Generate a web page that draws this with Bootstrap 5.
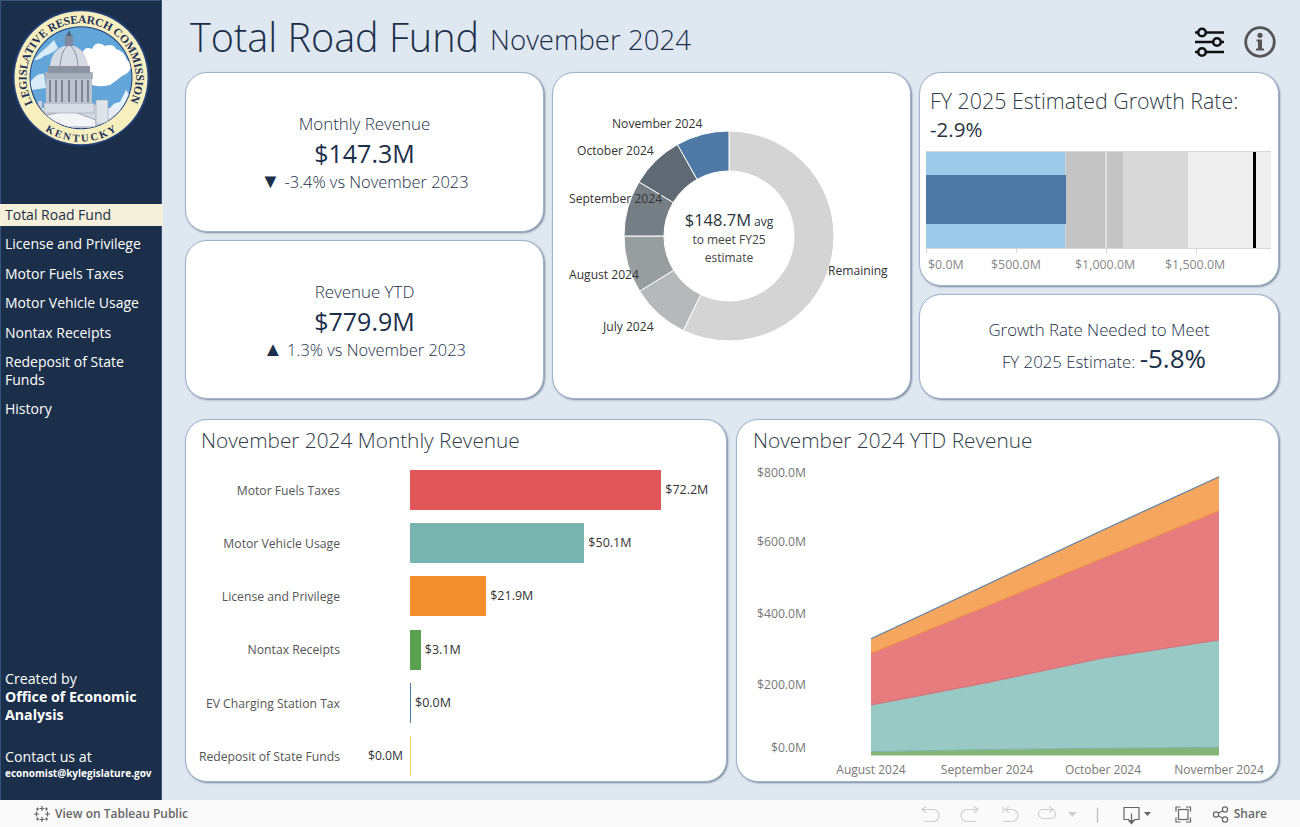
<!DOCTYPE html>
<html>
<head>
    <title>Total Road Fund</title>
    <link href="https://cdn.jsdelivr.net/npm/bootstrap@5.3.0/dist/css/bootstrap.min.css" rel="stylesheet">
    <style>
        body { height: 827px; overflow: hidden; background: #dfe7f1; font-family: "Open Sans", sans-serif; color: #1b2f4a; }
        .app-wrap { height: 800px; }
        .side-bar { width: 162px; background: #1b2f4a; border: 1px solid #35557f; border-bottom: 0; color: #fff; }
        .logo-box { height: 203px; }
        .side-link { color: #fff; font-size: 14px; line-height: 18px; padding: 2px 4px 2px 5px; margin-bottom: 7.4px; margin-left: -1px; }
        .side-link:hover { color: #fff; }
        .side-link.current { background: #f5f0d9; color: #1b2f4a; width: 163px; }
        .side-foot { font-size: 14.2px; line-height: 18px; padding-left: 4px; padding-bottom: 20px; }
        .side-foot b { font-weight: 700; }
        .side-mail { font-size: 10px; font-weight: 700; line-height: 14px; }
        .main-area { padding: 0 21px 0 23px; }
        .head-row { height: 72px; padding-left: 5px; padding-top: 4px; }
        .page-title { font-size: 39.6px; font-weight: 300; line-height: 1; margin: 0 11px 0 0; }
        .page-sub { font-size: 27.6px; font-weight: 300; line-height: 1; }
        .head-icons { gap: 18px; margin-right: 3px; margin-top: 7px; }
        .top-row { height: 327px; margin-bottom: 20px; }
        .low-row { height: 363px; }
        .col-kpi { width: 359px; }
        .col-side { width: 360px; }
        .tile { border: 1px solid #9db3cc; border-radius: 22px; box-shadow: 1px 1px 2px rgba(40,60,90,.55); background: #fff; overflow: hidden; color: #1b2f4a; }
        .kpi-box { padding-top: 3px; }
        .kpi-name { font-size: 16.9px; font-weight: 300; line-height: 22px; }
        .kpi-val { font-size: 25px; font-weight: 500; line-height: 36px; }
        .kpi-note { font-size: 16.4px; font-weight: 300; line-height: 22px; }
        .kpi-arrow { font-size: 20px; line-height: 16px; font-family: "DejaVu Sans", sans-serif; }
        .tile-head { font-size: 20.8px; font-weight: 300; color: #2f3b47; line-height: 28px; }
        .head-bar { flex-shrink: 0; height: 44px; padding: 6px 0 0 15px; }
        .head-list { height: 36px; }
        .head-ytd { padding-left: 16px; }
        .head-bullet { height: 73px; padding: 14px 0 0 10px; }
        .head-bullet .tile-head { font-size: 21.4px; }
        .bullet-val { font-size: 20.5px; font-weight: 500; line-height: 28px; color: #2b3540; }
        .need-box { margin-top: -2px; }
        .need-name { font-size: 16.8px; font-weight: 300; line-height: 31px; }
        .need-line { padding-left: 10px; }
        .need-big { font-size: 26px; font-weight: 400; line-height: 1; }
        .bar-list { padding-top: 7.4px; }
        .bar-row { height: 53.2px; font-size: 12.2px; color: #555; }
        .bar-label { width: 154px; text-align: right; padding-top: 2px; }
        .bar-neg { width: 70px; text-align: right; padding: 1px 7px 0 0; color: #333; }
        .bar-fill { height: 40px; }
        .bar-val { padding: 1px 0 0 4px; color: #333; white-space: nowrap; font-size: 12.5px; }
        .chart-txt { font-family: "Open Sans", sans-serif; }
        .tool-bar { height: 27px; background: #fafafa; font-size: 12px; font-weight: 600; color: #666; }
        .tool-left { padding-left: 33px; }
        .tool-right { padding-right: 33px; }
        .logo-txt { font-family: "Liberation Serif", serif; font-weight: 700; fill: #1d2f5c; }
    </style>
</head>
<body class="d-flex flex-column">
    <div class="app-wrap d-flex">
        <div class="side-bar d-flex flex-column">
            <div class="logo-box">
                <svg width="160" height="160" viewBox="1 1 160 160">
                    <defs>
                        <clipPath id="logo-clip"><circle cx="81" cy="77.7" r="50.5"/></clipPath>
                        <path id="logo-top" d="M32.9 103.3A54.5 54.5 0 1 1 129.1 103.3"/>
                        <path id="logo-low" d="M43.4 129.500A64 64 0 0 0 118.600 129.500"/>
                    </defs>
                    <circle cx="81" cy="77.7" r="68.3" fill="#24407a"/>
                    <circle cx="81" cy="77.7" r="66.5" fill="#f7efbe"/>
                    <circle cx="81" cy="77.7" r="51.5" fill="#1f3f78"/>
                    <circle cx="81" cy="77.7" r="50.5" fill="#62a5d9"/>
                    <text class="logo-txt" font-size="11.500"><textPath href="#logo-top" textLength="222" lengthAdjust="spacing">LEGISLATIVE RESEARCH COMMISSION</textPath></text>
                    <g clip-path="url(#logo-clip)">
                        <path d="M83 52 q2 -6 9 -3 q4 -9 13 -3 q8 -3 11 3 q8 2 11 11 q5 3 4 8 q-3 6 -9 8 q-6 5 -12 9 q-12 3 -20 -1 q-5 -6 -4 -13 q-4 -9 -3 -19z" fill="#fff"/>
                        <path d="M34 60 q6 -8 14 -14 l6 -6 l4 8 q-6 6 -14 8 q-4 4 -10 4z" fill="#d9ebf7"/>
                        <path d="M30 82 q8 -10 14 -8 l2 14 l-14 2z" fill="#d9ebf7"/>
                        <path d="M110 108 q4 -6 10 -6 l6 -12 l6 8 l-4 14 l-18 0z" fill="#e6f2fa"/>
                        <rect x="28" y="108" width="106" height="24" fill="#e9edf3"/>
                        <path d="M36 128 L40 112 L100 104 L110 128z" fill="#d4d9e2"/>
                        <path d="M43 116 L69 110 L96 120 L96 127 L43 127z" fill="#f3f4f8" stroke="#8f97a8" stroke-width=".8"/>
                        <rect x="96" y="100" width="12" height="24" fill="#dfe3ea" stroke="#98a0b0" stroke-width=".6"/>
                        <rect x="38" y="101" width="4" height="12" fill="#ccd1db"/>
                        <rect x="44" y="103" width="50" height="10" fill="#d8dce4" stroke="#9aa1b0" stroke-width=".6"/>
                        <rect x="46" y="78" width="46" height="26" fill="#bcc3cf"/>
                        <path d="M50 80v22M56 80v22M62 80v22M69 80v22M76 80v22M82 80v22M88 80v22" stroke="#6f7788" stroke-width="1.6"/>
                        <rect x="45" y="72" width="48" height="7" fill="#a8afbd"/>
                        <rect x="48" y="66" width="42" height="7" fill="#8b93a5"/>
                        <path d="M50 66 Q52 47 69 45 Q86 47 88 66z" fill="#d6dae3"/>
                        <path d="M60 66 Q61 52 67 46M78 66 Q77 52 71 46" stroke="#8c93a4" stroke-width="1" fill="none"/>
                        <rect x="65" y="35" width="8" height="11" fill="#7f899e"/>
                        <path d="M69 30 l2.500 6 h-5z" fill="#53607c"/>
                    </g>
                    <text class="logo-txt" font-size="10.5"><textPath href="#logo-low" textLength="76" lengthAdjust="spacing" startOffset="2">KENTUCKY</textPath></text>
                </svg>
            </div>
            <nav class="nav flex-column">
                <a class="nav-link side-link current" href="#">Total Road Fund</a>
                <a class="nav-link side-link" href="#">License and Privilege</a>
                <a class="nav-link side-link" href="#">Motor Fuels Taxes</a>
                <a class="nav-link side-link" href="#">Motor Vehicle Usage</a>
                <a class="nav-link side-link" href="#">Nontax Receipts</a>
                <a class="nav-link side-link" href="#">Redeposit of State Funds</a>
                <a class="nav-link side-link" href="#">History</a>
            </nav>
            <div class="side-foot mt-auto">
                <div>Created by</div>
                <div><b>Office of Economic Analysis</b></div>
                <div class="mt-4">Contact us at</div>
                <div class="side-mail">economist@kylegislature.gov</div>
            </div>
        </div>

        <div class="main-area flex-grow-1 d-flex flex-column">
            <div class="head-row d-flex align-items-center">
                <h1 class="page-title">Total Road Fund</h1>
                <span class="page-sub mt-1">November 2024</span>
                <div class="head-icons ms-auto d-flex align-items-center">
                    <svg width="32" height="32" viewBox="0 0 32 32">
                        <g stroke="#111" stroke-width="2.6" fill="none">
                            <path d="M1 6.500h29M1 16h29M1 26h29"/>
                            <circle cx="8" cy="6.500" r="3.800" fill="#dfe7f1"/>
                            <circle cx="23" cy="16" r="3.800" fill="#dfe7f1"/>
                            <circle cx="8" cy="26" r="3.800" fill="#dfe7f1"/>
                        </g>
                    </svg>
                    <svg width="32" height="32" viewBox="0 0 32 32">
                        <circle cx="16" cy="16" r="14.300" fill="none" stroke="#555" stroke-width="2.8"/>
                        <circle cx="16" cy="9.300" r="2.600" fill="#555"/>
                        <path d="M12.500 13.500h5.500v9h2v2h-8v-2h2v-7h-1.500z" fill="#555"/>
                    </svg>
                </div>
            </div>

            <div class="top-row d-flex gap-2">
                <div class="col-kpi d-flex flex-column gap-2">
                    <div class="card tile kpi-box flex-fill text-center justify-content-center">
                        <div class="kpi-name">Monthly Revenue</div>
                        <div class="kpi-val">$147.3M</div>
                        <div class="kpi-note"><span class="kpi-arrow">▼</span> -3.4% vs November 2023</div>
                    </div>
                    <div class="card tile kpi-box flex-fill text-center justify-content-center">
                        <div class="kpi-name">Revenue YTD</div>
                        <div class="kpi-val">$779.9M</div>
                        <div class="kpi-note"><span class="kpi-arrow">▲</span> 1.3% vs November 2023</div>
                    </div>
                </div>

                <div class="card tile col-kpi">
                    <svg id="donut" width="357" height="325" viewBox="553 73 357 325" class="chart-txt"></svg>
                </div>

                <div class="col-side d-flex flex-column gap-2">
                    <div class="card tile" style="height:214px">
                        <div class="head-bullet">
                            <div class="tile-head">FY 2025 Estimated Growth Rate:</div>
                            <div class="bullet-val">-2.9%</div>
                        </div>
                        <svg width="358" height="139" viewBox="920 146 358 139" class="chart-txt">
                            <rect x="926" y="151" width="139.500" height="97" fill="#9ecae9"/>
                            <rect x="1065.500" y="151" width="57.500" height="97" fill="#c4c4c4"/>
                            <rect x="1123" y="151" width="65" height="97" fill="#d9d9d9"/>
                            <rect x="1188" y="151" width="83" height="97" fill="#efefef"/>
                            <rect x="926" y="175" width="140" height="49" fill="#4e79a7"/>
                            <rect x="1105.500" y="151" width="1.200" height="97" fill="#f0f0f0"/>
                            <rect x="1253" y="151" width="3" height="97" fill="#000"/>
                            <path d="M926 151.500H1271M926 248.500H1271M926.500 248v5M1016.500 248v5M1106.500 248v5M1196.500 248v5" stroke="#d6d6d6" fill="none"/>
                            <g font-size="12.4" fill="#888">
                                <text x="928" y="269">$0.0M</text>
                                <text x="991" y="269">$500.0M</text>
                                <text x="1075" y="269">$1,000.0M</text>
                                <text x="1165" y="269">$1,500.0M</text>
                            </g>
                        </svg>
                    </div>
                    <div class="card tile flex-fill text-center justify-content-center">
                        <div class="need-box">
                            <div class="need-name">Growth Rate Needed to Meet</div>
                            <div class="need-name need-line">FY 2025 Estimate: <span class="need-big">-5.8%</span></div>
                        </div>
                    </div>
                </div>
            </div>

            <div class="low-row d-flex">
                <div class="card tile" style="width:542px">
                    <div class="head-bar head-list tile-head">November 2024 Monthly Revenue</div>
                    <div class="bar-list" id="bar-list"></div>
                </div>
                <div class="card tile ms-auto" style="width:543px">
                    <div class="head-bar head-ytd tile-head">November 2024 YTD Revenue</div>
                    <svg width="541" height="317" viewBox="737 464 541 317" class="chart-txt">
                        <polygon points="871,755.500 871,751.700 987,749.500 1103,748.300 1219,747.300 1219,755.500" fill="#82b576"/>
                        <polygon points="871,751.700 871,705 987,682.700 1103,658 1219,640 1219,747.300 1103,748.300 987,749.500" fill="#99c9c4"/>
                        <polygon points="871,705 871,653.300 987,606 1103,558 1219,510.700 1219,640 1103,658 987,682.700" fill="#e77c7f"/>
                        <polygon points="871,653.300 871,638.700 987,584.500 1103,530 1219,476.700 1219,510.700 1103,558 987,606" fill="#f5a75f"/>
                        <polyline points="871,638.700 987,584.500 1103,530 1219,476.700" fill="none" stroke="#5b7fa6" stroke-width="1.200"/>
                        <polyline points="871,653.300 987,606 1103,558 1219,510.700" fill="none" stroke="#f08f3c" stroke-width="1"/>
                        <polyline points="871,705 987,682.700 1103,658 1219,640" fill="none" stroke="#cf7077" stroke-width="1"/>
                        <polyline points="871,751.700 987,749.500 1103,748.300 1219,747.300" fill="none" stroke="#7db3a6" stroke-width="1"/>
                        <g font-size="12.2" fill="#777" text-anchor="end">
                            <text x="806" y="477">$800.0M</text>
                            <text x="806" y="546">$600.0M</text>
                            <text x="806" y="618">$400.0M</text>
                            <text x="806" y="689">$200.0M</text>
                            <text x="806" y="752">$0.0M</text>
                        </g>
                        <g font-size="12" fill="#777" text-anchor="middle">
                            <text x="871" y="774">August 2024</text>
                            <text x="987" y="774">September 2024</text>
                            <text x="1103" y="774">October 2024</text>
                            <text x="1219" y="774">November 2024</text>
                        </g>
                    </svg>
                </div>
            </div>
        </div>
    </div>

    <div class="tool-bar d-flex align-items-center">
        <div class="tool-left d-flex align-items-center gap-1">
            <svg width="18" height="18" viewBox="0 0 18 18" stroke="#666" stroke-width="1.200" fill="none">
                <path d="M9 1v5M6.500 3.500h5M9 12v5M6.500 14.500h5M3.500 6.500v5M1 9h5M14.500 6.500v5M12 9h5M4.500 2.500v3M3 4h3M13.500 2.500v3M12 4h3M4.500 12.500v3M3 14h3M13.500 12.500v3M12 14h3"/>
            </svg>
            <span>View on Tableau Public</span>
        </div>
        <div class="tool-right ms-auto d-flex align-items-center">
            <svg width="332" height="24" viewBox="900 801.500 332 24" stroke="#cfcfcf" stroke-width="1.200" fill="none">
                <path d="M921 809h10a5 5 0 0 1 0 12h-9M924 806l-4 3 4 3"/>
                <path d="M975 809h-10a5 5 0 0 0 0 12h9M972 806l4 3-4 3"/>
                <path d="M1004 809h6a5 5 0 0 1 0 12h-9M1007 806l-4 3 4 3M1001 806v6"/>
                <path d="M1050 809h-9a4 4 0 0 0 0 9h8a4 4 0 0 0 0-9M1047 806l4 3-4 3"/>
                <path d="M1066 811.500h9l-4.500 5z" fill="#cfcfcf" stroke="none"/>
                <path d="M1095.500 807v15" stroke="#bbb"/>
                <g stroke="#666">
                    <path d="M1127 819h-5v-12h15v12h-5M1129.500 813v10"/>
                    <path d="M1127 820l2.500 3 2.500-3z" fill="#666"/>
                    <path d="M1174 811v-4.500h4.500M1184 806.500h4.500v4.500M1188.500 817v4.500H1184M1178.500 821.500H1174V817"/>
                    <rect x="1176.500" y="809" width="9.500" height="10"/>
                    <circle cx="1214" cy="814" r="2.600"/>
                    <circle cx="1223" cy="809" r="2.600"/>
                    <circle cx="1223" cy="819" r="2.600"/>
                    <path d="M1216.300 812.800l4.500-2.600M1216.300 815.200l4.500 2.600"/>
                </g>
                <path d="M1142 811.500h7l-3.500 4z" fill="#666" stroke="none"/>
            </svg>
            <span>Share</span>
        </div>
    </div>

    <script>
        // bars: px per $M taken from the longest bar
        const bars = [
            ['Motor Fuels Taxes', 72.2, '#e15759'],
            ['Motor Vehicle Usage', 50.1, '#79b5b0'],
            ['License and Privilege', 21.9, '#f28e2b'],
            ['Nontax Receipts', 3.1, '#59a14f'],
            ['EV Charging Station Tax', 0, '#4e79a7'],
            ['Redeposit of State Funds', 0, '#f1ce63']
        ];
        const barList = document.getElementById('bar-list');
        bars.forEach((b, i) => {
            const width = Math.max(b[1] * 3.48, 1);
            const val = '$' + b[1].toFixed(1) + 'M';
            const last = i === bars.length - 1;
            barList.innerHTML += `
                <div class="bar-row d-flex align-items-center">
                    <div class="bar-label">${b[0]}</div>
                    <div class="bar-neg">${last ? val : ''}</div>
                    <div class="bar-fill" style="width:${width}px;background:${b[2]}"></div>
                    <div class="bar-val">${last ? '' : val}</div>
                </div>`;
        });

        // donut: angles measured clockwise from 12 o'clock
        const cx = 729, cy = 236, ro = 105, ri = 65;
        const slices = [
            [0, 205.8, '#d4d4d4'],
            [205.8, 238.3, '#b5b9ba'],
            [238.3, 270, '#989ea0'],
            [270, 301, '#757e84'],
            [301, 330.6, '#5f6a74'],
            [330.6, 360, '#4e79a7']
        ];
        const pt = (r, a) => {
            const t = a * Math.PI / 180;
            return (cx + r * Math.sin(t)).toFixed(2) + ' ' + (cy - r * Math.cos(t)).toFixed(2);
        };
        let svg = '';
        slices.forEach(s => {
            const big = s[1] - s[0] > 180 ? 1 : 0;
            svg += `<path d="M${pt(ro, s[0])}A${ro} ${ro} 0 ${big} 1 ${pt(ro, s[1])}L${pt(ri, s[1])}A${ri} ${ri} 0 ${big} 0 ${pt(ri, s[0])}Z" fill="${s[2]}" stroke="#fff" stroke-width="1"/>`;
        });
        const labels = [
            ['November 2024', 612, 128], ['October 2024', 577, 155], ['September 2024', 569, 203],
            ['August 2024', 569, 279], ['July 2024', 603, 331], ['Remaining', 828, 275]
        ];
        labels.forEach(l => {
            svg += `<text x="${l[1]}" y="${l[2]}" font-size="12.1" fill="#333">${l[0]}</text>`;
        });
        svg += `<text x="729" y="226" text-anchor="middle" fill="#2b3540"><tspan font-size="16.5">$148.7M</tspan><tspan font-size="12" dx="3">avg</tspan></text>`;
        svg += `<text x="729" y="244" text-anchor="middle" font-size="12" fill="#444">to meet FY25</text>`;
        svg += `<text x="729" y="262" text-anchor="middle" font-size="12" fill="#444">estimate</text>`;
        document.getElementById('donut').innerHTML = svg;
    </script>
    <script src="https://cdn.jsdelivr.net/npm/bootstrap@5.3.0/dist/js/bootstrap.bundle.min.js"></script>
</body>
</html>
